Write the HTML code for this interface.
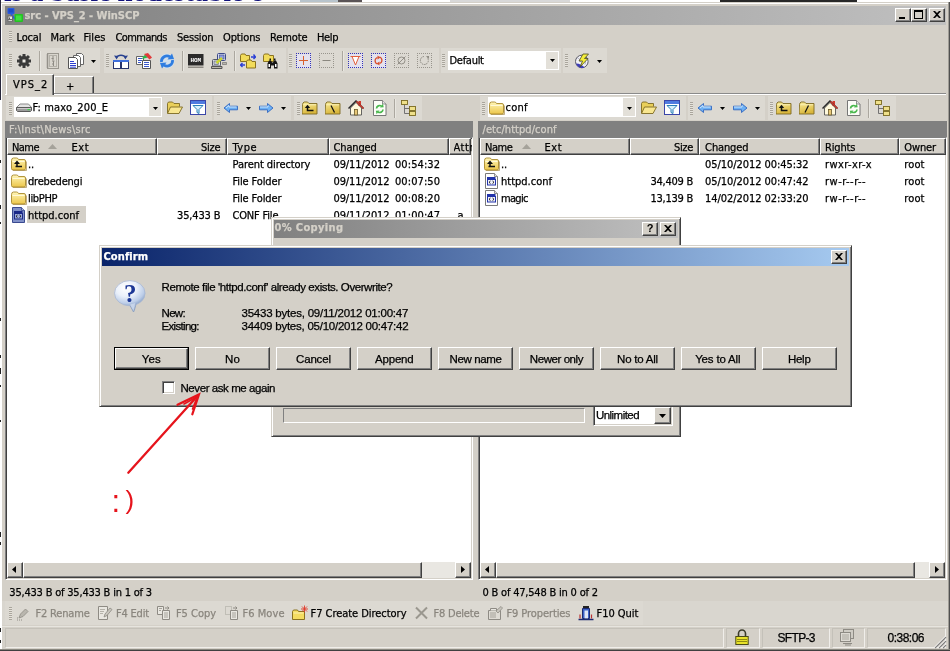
<!DOCTYPE html><html><head><meta charset="utf-8"><title>src - VPS_2 - WinSCP</title><style>
html,body{margin:0;padding:0}
body{width:950px;height:651px;overflow:hidden;position:relative;background:#d4d0c8;font:11px "DejaVu Sans Condensed","Liberation Sans",sans-serif;color:#000;letter-spacing:-0.25px}
div,span,svg{position:absolute;box-sizing:border-box;white-space:nowrap}
.t{line-height:14px;height:14px}
.ms{font-family:"Liberation Sans",sans-serif;font-size:11px;letter-spacing:-0.3px}
.grip{width:3px;border-left:1px dotted #9a968e;border-right:1px dotted #9a968e;opacity:.0}
.gr{width:3px;background:repeating-linear-gradient(to bottom,#a9a59c 0,#a9a59c 1px,#e6e3dc 1px,#e6e3dc 2px)}
.sep{width:2px;border-left:1px solid #aba79f;border-right:1px solid #e9e7e1}
.raised{background:#d4d0c8;border:1px solid;border-color:#fff #404040 #404040 #fff;box-shadow:inset -1px -1px 0 #808080,inset 1px 1px 0 #d4d0c8}
.btn{background:#d4d0c8;border:1px solid;border-color:#fff #404040 #404040 #fff;box-shadow:inset -1px -1px 0 #808080;text-align:center;height:23px;line-height:20px}
.sunken{border:1px solid;border-color:#808080 #fff #fff #808080;box-shadow:inset 1px 1px 0 #404040,inset -1px -1px 0 #d4d0c8}
.hdr{top:138px;height:17px;background:#d4d0c8;border:1px solid;border-color:#fff #404040 #404040 #fff;box-shadow:inset -1px -1px 0 #808080;line-height:15px;padding-left:5px}
.hdr.r{text-align:right;padding-right:6px;padding-left:0}
.row{height:17px;line-height:17px}
.dis{color:#8a867e}
</style></head><body><div id="w" style="left:0;top:0;width:950px;height:651px;will-change:transform">
<div style="left:0;top:0;width:950px;height:3px;background:#fff;overflow:hidden"><span style="left:4px;top:-23px;font:bold 27px 'Liberation Serif',serif;color:#10107a;letter-spacing:0.300px">is a basic nodestable e</span><div style="left:300px;top:0;width:38px;height:2px;background:#b8c4cc"></div><div style="left:338px;top:0;width:24px;height:2px;background:#5a5456"></div><div style="left:450px;top:0;width:120px;height:2px;background:#d8d8d8"></div><div style="left:720px;top:0;width:137px;height:2px;background:#282828"></div></div>
<div style="left:0;top:2px;width:950px;height:649px;background:#d4d0c8;border-left:1px solid #d4d0c8;border-top:1px solid #d4d0c8;box-shadow:inset 1px 1px 0 #fff"></div>
<div style="left:0;top:0;width:1px;height:651px;background:#fff"></div>
<div style="left:0;top:0;width:1px;height:100px;background:#26263a"></div>
<div style="left:0;top:160px;width:1px;height:3px;background:#222"></div>
<div style="left:0;top:178px;width:1px;height:2px;background:#222"></div>
<div style="left:0;top:205px;width:1px;height:4px;background:#222"></div>
<div style="left:0;top:222px;width:1px;height:2px;background:#222"></div>
<div style="left:0;top:318px;width:1px;height:3px;background:#222"></div>
<div style="left:0;top:355px;width:1px;height:3px;background:#222"></div>
<div style="left:0;top:368px;width:1px;height:6px;background:#222"></div>
<div style="left:0;top:385px;width:1px;height:2px;background:#222"></div>
<div style="left:0;top:420px;width:1px;height:2px;background:#222"></div>
<div style="left:0;top:532px;width:1px;height:5px;background:#222"></div>
<div style="left:0;top:542px;width:1px;height:3px;background:#222"></div>
<div style="left:0;top:628px;width:1px;height:4px;background:#222"></div>
<div style="left:0;top:640px;width:1px;height:3px;background:#222"></div>
<div style="left:5px;top:6px;width:941px;height:19px;background:linear-gradient(to right,#808080,#c0c0c0)"></div>
<div style="left:24.5px;top:8px;font:bold 11px 'DejaVu Sans Condensed','Liberation Sans',sans-serif;line-height:16px;height:16px;letter-spacing:-0.03px;white-space:pre;-webkit-text-stroke:0.25px;color:#d4d0c8;">src - VPS_2 - WinSCP</div>
<svg style="left:7px;top:7px" width="17" height="16" viewBox="0 0 17 16"><rect x="0.500" y="1" width="7" height="6" rx="1" fill="#2a5ae0"/><rect x="1.500" y="2" width="5" height="3.500" fill="#1e49c8"/><path d="M4 7l4 5" stroke="#2a5ae0" stroke-width="2"/><rect x="0.500" y="8.500" width="5.500" height="6" fill="#6a6a6a"/><rect x="1.500" y="9.500" width="3.500" height="2.500" fill="#e8e8e8"/><rect x="2" y="10.500" width="1" height="1.500" fill="#555"/><rect x="1.500" y="13" width="3.500" height="1" fill="#d0d0d0"/><rect x="7.500" y="7" width="8.500" height="8" rx="1" fill="#22c322"/><rect x="9" y="8.500" width="5.500" height="5" fill="#3fe03f"/></svg>
<div class="btn" style="left:895px;top:8px;width:16px;height:14px"></div>
<div style="left:899px;top:17px;width:6px;height:2px;background:#000"></div>
<div class="btn" style="left:911px;top:8px;width:16px;height:14px"></div>
<div style="left:914px;top:10px;width:9px;height:9px;border:1px solid #000;border-top-width:2px"></div>
<div class="btn" style="left:929px;top:8px;width:16px;height:14px"></div>
<svg style="left:933px;top:11px" width="8" height="7" viewBox="0 0 8 7"><path d="M0 0h2l2 2 2-2h2L5 3.5 8 7H6L4 5 2 7H0l3-3.5z" fill="#000"/></svg>
<div class="gr" style="left:9px;top:31px;height:11px"></div>
<div style="left:16.5px;top:29.5px;font:11px 'DejaVu Sans Condensed','Liberation Sans',sans-serif;line-height:16px;height:16px;letter-spacing:-0.16px;white-space:pre;-webkit-text-stroke:0.25px;">Local</div>
<div style="left:50.5px;top:29.5px;font:11px 'DejaVu Sans Condensed','Liberation Sans',sans-serif;line-height:16px;height:16px;letter-spacing:-0.14px;white-space:pre;-webkit-text-stroke:0.25px;">Mark</div>
<div style="left:83.5px;top:29.5px;font:11px 'DejaVu Sans Condensed','Liberation Sans',sans-serif;line-height:16px;height:16px;letter-spacing:0.09px;white-space:pre;-webkit-text-stroke:0.25px;">Files</div>
<div style="left:115.5px;top:29.5px;font:11px 'DejaVu Sans Condensed','Liberation Sans',sans-serif;line-height:16px;height:16px;letter-spacing:-0.58px;white-space:pre;-webkit-text-stroke:0.25px;">Commands</div>
<div style="left:177px;top:29.5px;font:11px 'DejaVu Sans Condensed','Liberation Sans',sans-serif;line-height:16px;height:16px;letter-spacing:-0.21px;white-space:pre;-webkit-text-stroke:0.25px;">Session</div>
<div style="left:223px;top:29.5px;font:11px 'DejaVu Sans Condensed','Liberation Sans',sans-serif;line-height:16px;height:16px;letter-spacing:-0.11px;white-space:pre;-webkit-text-stroke:0.25px;">Options</div>
<div style="left:270px;top:29.5px;font:11px 'DejaVu Sans Condensed','Liberation Sans',sans-serif;line-height:16px;height:16px;letter-spacing:-0.13px;white-space:pre;-webkit-text-stroke:0.25px;">Remote</div>
<div style="left:317px;top:29.5px;font:11px 'DejaVu Sans Condensed','Liberation Sans',sans-serif;line-height:16px;height:16px;letter-spacing:-0.36px;white-space:pre;-webkit-text-stroke:0.25px;">Help</div>
<div style="left:5px;top:48px;width:95px;height:25px;background:#dcd9d2"></div>
<div style="left:104px;top:48px;width:182px;height:25px;background:#dcd9d2"></div>
<div style="left:288px;top:48px;width:151px;height:25px;background:#dcd9d2"></div>
<div style="left:441px;top:48px;width:120px;height:25px;background:#dcd9d2"></div>
<div style="left:563px;top:48px;width:44px;height:25px;background:#dcd9d2"></div>
<div class="gr" style="left:9px;top:54px;height:13px"></div>
<div class="gr" style="left:106px;top:54px;height:13px"></div>
<div class="gr" style="left:289px;top:54px;height:13px"></div>
<div class="gr" style="left:442px;top:54px;height:13px"></div>
<div class="gr" style="left:565px;top:54px;height:13px"></div>
<div class="sep" style="left:39px;top:51px;height:20px"></div>
<div class="sep" style="left:182px;top:51px;height:20px"></div>
<div class="sep" style="left:234px;top:51px;height:20px"></div>
<div class="sep" style="left:342px;top:51px;height:20px"></div>
<svg style="left:16px;top:53px" width="16" height="16" viewBox="0 0 16 16"><g fill="#3a3a3a"><circle cx="8" cy="8" r="5"/><g id="gt"><rect x="6.500" y="1" width="3" height="14"/><rect x="1" y="6.500" width="14" height="3"/></g><use href="#gt" transform="rotate(45 8 8)"/></g><rect x="6.500" y="6.500" width="3" height="3" fill="#eceae4"/></svg>
<svg style="left:45px;top:53px" width="16" height="16" viewBox="0 0 16 16"><rect x="2.500" y="0.500" width="11" height="15" fill="#d9d6ce" stroke="#9a978f"/><rect x="4.500" y="2.500" width="7" height="11" fill="none" stroke="#b3b0a8"/><path d="M8 3v4M7 8h2.500M8.500 8v5M6.500 5.500h2M7 11h2" stroke="#8e8b84"/><path d="M1.500 2h2M1.500 4h2M1.500 6h2M1.500 8h2M1.500 10h2M1.500 12h2M1.500 14h2" stroke="#8e8b84"/></svg>
<svg style="left:68px;top:53px" width="16" height="16" viewBox="0 0 16 16"><path d="M8.500 0.500h5l2 2v9h-7z" fill="#fff" stroke="#666"/><path d="M5.500 2.500h5l2 2v9h-7z" fill="#fff" stroke="#666"/><path d="M0.500 4.500h7l2 2v9h-9z" fill="#fff" stroke="#555"/><path d="M2 8.500h4M2 10.500h6M2 12.500h6M2 14.200h6" stroke="#2e3fcf"/></svg>
<svg style="left:113px;top:53px" width="16" height="16" viewBox="0 0 16 16"><rect x="0.500" y="7.500" width="7" height="8" fill="#fff" stroke="#27336b"/><rect x="8.500" y="7.500" width="7" height="8" fill="#fff" stroke="#27336b"/><rect x="0" y="7" width="16" height="2" fill="#3f6fdc"/><path d="M3.500 4.500C5 1.500 11 1.500 12.500 4.500" fill="none" stroke="#27408f" stroke-width="1.300"/><path d="M1 2.500l2.700 4 1.800-3.500zM15 2.500l-2.700 4-1.800-3.500z" fill="#27408f"/></svg>
<svg style="left:136px;top:53px" width="16" height="16" viewBox="0 0 16 16"><path d="M0.500 3.500h7v8h-7z" fill="#fff" stroke="#666"/><path d="M2 5.500h4M2 7.500h4M2 9.500h3" stroke="#3a57c9"/><path d="M6.500 7.500h8v8h-8z" fill="#fff" stroke="#555"/><path d="M8 9.500h5M8 11.500h5M8 13.500h5" stroke="#3a57c9"/><path d="M5.500 6l3.500-4.500 3 3z" fill="#2cb84a"/><path d="M8 1l4-1 4 4.500-2.500 2z" fill="#e23a3a"/></svg>
<svg style="left:159px;top:53px" width="16" height="16" viewBox="0 0 16 16"><circle cx="8" cy="8" r="7.500" fill="#cfe2f7" opacity="0.700"/><path d="M2.500 9a5.500 5.500 0 0 1 8.500-5.200" fill="none" stroke="#2f7de0" stroke-width="2.800"/><path d="M8.500 6.500l6.500-0.500-2-5.500z" fill="#2f7de0"/><path d="M13.500 7a5.500 5.500 0 0 1-8.500 5.200" fill="none" stroke="#2f7de0" stroke-width="2.800"/><path d="M7.500 9.500l-6.500 0.500 2 5.500z" fill="#2f7de0"/></svg>
<svg style="left:188px;top:53px" width="16" height="16" viewBox="0 0 16 16"><rect x="0" y="1" width="15.500" height="11.500" fill="#2a2a2a"/><rect x="0" y="13.500" width="15.500" height="1.500" fill="#8e8b84"/><text x="7.800" y="8.500" font-family="Liberation Mono,monospace" font-weight="bold" font-size="6" fill="#fff" text-anchor="middle" letter-spacing="-0.100">HOM</text></svg>
<svg style="left:211px;top:53px" width="16" height="16" viewBox="0 0 16 16"><rect x="6.500" y="0.500" width="8" height="7" rx="1" fill="#d5daea" stroke="#3c4a8a"/><rect x="8.500" y="2" width="4.500" height="4" fill="#8e9be0" stroke="#3c4a8a" stroke-width="0.600"/><rect x="1.500" y="6.500" width="8" height="6.500" rx="1" fill="#e4e6ee" stroke="#555a6a"/><rect x="3" y="8" width="4.500" height="3.500" fill="#c2c6d4" stroke="#555a6a" stroke-width="0.600"/><path d="M0.500 13.500h10.500v2h-10.500z" fill="#b9b6ad" stroke="#555"/><path d="M11.500 9.500h4v2h-4z" fill="#b9b6ad" stroke="#666" stroke-width="0.600"/><path d="M5.500 10l5.500-5" stroke="#c9d630" stroke-width="2.500"/></svg>
<svg style="left:240px;top:53px" width="16" height="16" viewBox="0 0 16 16"><path d="M0.500 2.500l1-1.500h3.500l1 1.500h3.500v6h-9z" fill="#f2dc5a" stroke="#8a7320"/><path d="M6.500 8.500l1-1.500h3.500l1 1.500h3.500v6.500h-9z" fill="#f2dc5a" stroke="#8a7320"/><path d="M11 4h4.500l-2-2.500M15.500 4l-2 2" fill="none" stroke="#2a3fd6" stroke-width="1.400"/><path d="M5 12h-4.500l2-2M0.500 12l2 2" fill="none" stroke="#2a3fd6" stroke-width="1.400"/></svg>
<svg style="left:263px;top:53px" width="16" height="16" viewBox="0 0 16 16"><path d="M0.500 2.500l1-1.500h4l1 1.500h4v6h-10z" fill="#f2dc5a" stroke="#8a7320"/><path d="M4.500 15.500v-5l1.500-3h2l1 2h1l1-2h2l1.500 3v5h-3.500v-3h-3v3z" fill="#151515"/><rect x="5.500" y="11" width="1.500" height="3" fill="#fff"/><rect x="12" y="11" width="1.500" height="3" fill="#fff"/><rect x="6.500" y="5.500" width="1.500" height="2" fill="#151515"/><rect x="11" y="5.500" width="1.500" height="2" fill="#151515"/></svg>
<svg style="left:296px;top:53px" width="16" height="16" viewBox="0 0 16 16"><rect x="0.500" y="0.500" width="14" height="14" fill="#e4e2ee" stroke="#3232b8" stroke-dasharray="1 1" stroke-dashoffset="0.5" shape-rendering="crispEdges"/><path d="M7.500 3v9M3 7.500h9" stroke="#d8602e" stroke-width="1"/></svg>
<svg style="left:319px;top:53px" width="16" height="16" viewBox="0 0 16 16"><rect x="0.500" y="0.500" width="14" height="14" fill="none" stroke="#98958d" stroke-dasharray="1 1" stroke-dashoffset="0.5" shape-rendering="crispEdges"/><path d="M3.500 7.500h8" stroke="#8a877f" stroke-width="1"/></svg>
<svg style="left:348px;top:53px" width="16" height="16" viewBox="0 0 16 16"><rect x="0.500" y="0.500" width="14" height="14" fill="#e4e2ee" stroke="#3232b8" stroke-dasharray="1 1" stroke-dashoffset="0.5" shape-rendering="crispEdges"/><path d="M4 3.500l3.500 8.500 3.500-8.500z" fill="#fff"/><path d="M2.500 3.500h10M4 3.500l3.500 8.500 3.500-8.500" fill="none" stroke="#e2603c" stroke-width="1"/></svg>
<svg style="left:371px;top:53px" width="16" height="16" viewBox="0 0 16 16"><rect x="0.500" y="0.500" width="14" height="14" fill="#e4e2ee" stroke="#3232b8" stroke-dasharray="1 1" stroke-dashoffset="0.5" shape-rendering="crispEdges"/><path d="M6.500 11a3.400 3.400 0 0 1 0-6.500M8.500 4a3.400 3.400 0 0 1 0 6.500" fill="none" stroke="#d8502e" stroke-width="1.300"/><path d="M6.500 2.500l3 2-3 2zM8.500 8.500l-3 2 3 2z" fill="#d8502e"/></svg>
<svg style="left:394px;top:53px" width="16" height="16" viewBox="0 0 16 16"><rect x="0.500" y="0.500" width="14" height="14" fill="none" stroke="#98958d" stroke-dasharray="1 1" stroke-dashoffset="0.5" shape-rendering="crispEdges"/><circle cx="7.500" cy="7.500" r="3.500" fill="none" stroke="#8a877f" stroke-width="0.900"/><path d="M3.500 11.500l8-8" stroke="#8a877f" stroke-width="0.900"/></svg>
<svg style="left:417px;top:53px" width="16" height="16" viewBox="0 0 16 16"><rect x="0.500" y="0.500" width="14" height="14" fill="none" stroke="#98958d" stroke-dasharray="1 1" stroke-dashoffset="0.5" shape-rendering="crispEdges"/><path d="M10.800 5.500a4 4 0 1 1-3.300-2" fill="none" stroke="#8a877f" stroke-width="1" stroke-dasharray="1.500 0.800"/><path d="M9 3.200l3-0.200-0.200 3z" fill="#8a877f"/></svg>
<svg style="left:575px;top:53px" width="16" height="16" viewBox="0 0 16 16"><circle cx="6.800" cy="8.500" r="6.300" fill="#f2f2f6" stroke="#5a5a66" stroke-width="1"/><path d="M1 10.500a6.300 6.300 0 0 0 8.500 4c-1.500-2-5-4-8.500-4z" fill="#3d3db8"/><path d="M2.500 5c2 0.500 3 2 3 4M9 3.500c1.500 2 2 5 1 8" fill="none" stroke="#9a9ab0" stroke-width="0.800"/><path d="M13.500 1h-5.500l-4 7h3.500l-2.500 6 8-8.500h-3.500z" fill="#f4ee3a" stroke="#4a4a22" stroke-width="0.800" stroke-linejoin="round"/></svg>
<svg style="left:91px;top:60px" width="5" height="3" viewBox="0 0 5 3"><path d="M0 0h5L2.5 3z" fill="#000"/></svg>
<svg style="left:597px;top:60px" width="5" height="3" viewBox="0 0 5 3"><path d="M0 0h5L2.5 3z" fill="#000"/></svg>
<div style="left:448px;top:51px;width:111px;height:19px;background:#fff"></div>
<div style="left:546px;top:52px;width:12px;height:17px;background:#e3e0d9"></div>
<div style="left:449.5px;top:53px;font:11px 'DejaVu Sans Condensed','Liberation Sans',sans-serif;line-height:16px;height:16px;letter-spacing:-0.28px;white-space:pre;-webkit-text-stroke:0.25px;">Default</div>
<svg style="left:550px;top:59px" width="5" height="3" viewBox="0 0 5 3"><path d="M0 0h5L2.5 3z" fill="#000"/></svg>
<div style="left:5px;top:94px;width:941px;height:2px;border-top:1px solid #fff;background:#d4d0c8"></div>
<div style="left:54px;top:93px;width:892px;height:1px;background:#8a8a8a"></div>
<div style="left:54px;top:76px;width:40px;height:17px;background:#d4d0c8;border:1px solid;border-color:#fff #404040 transparent #fff;border-bottom:none;box-shadow:inset -1px 0 0 #808080"></div>
<div style="left:6px;top:74px;width:48px;height:21px;background:#d4d0c8;border:1px solid;border-color:#fff #404040 transparent #fff;border-bottom:none;box-shadow:inset -1px 0 0 #808080"></div>
<div style="left:13px;top:76.5px;font:11px 'DejaVu Sans Condensed','Liberation Sans',sans-serif;line-height:16px;height:16px;letter-spacing:0.98px;white-space:pre;-webkit-text-stroke:0.25px;">VPS_2</div>
<div style="left:66px;top:79px;font:11px 'DejaVu Sans Condensed','Liberation Sans',sans-serif;line-height:16px;height:16px;letter-spacing:-0.25px;white-space:pre;-webkit-text-stroke:0.25px;">+</div>
<div style="left:5px;top:96px;width:468px;height:24px;background:#d4d0c8"></div>
<div style="left:6px;top:96px;width:206px;height:24px;background:#dcd9d2"></div>
<div style="left:214px;top:96px;width:77px;height:24px;background:#dcd9d2"></div>
<div style="left:294px;top:96px;width:128px;height:24px;background:#dcd9d2"></div>
<div class="gr" style="left:9px;top:102px;height:13px"></div>
<div class="gr" style="left:217px;top:102px;height:13px"></div>
<div class="gr" style="left:297px;top:102px;height:13px"></div>
<div style="left:14px;top:97px;width:148px;height:20px;background:#fff"></div>
<div style="left:149px;top:98px;width:12px;height:18px;background:#e3e0d9"></div>
<svg style="left:153px;top:107px" width="5" height="3" viewBox="0 0 5 3"><path d="M0 0h5L2.5 3z" fill="#000"/></svg>
<svg style="left:16px;top:100px" width="16" height="16" viewBox="0 0 16 16"><path d="M0.500 7.500l3.500-3.500h8.500l3 3.500z" fill="#e3e3e3" stroke="#8a8a8a"/><path d="M0.500 7.500h15v3l-1 1h-13l-1-1z" fill="#9c9c9c" stroke="#5a5a5a"/><path d="M1 8.500h14" stroke="#c9c9c9"/><rect x="11.500" y="9" width="2.500" height="1.200" fill="#3fd24a"/></svg>
<div style="left:32.5px;top:100px;font:11px 'DejaVu Sans Condensed','Liberation Sans',sans-serif;line-height:16px;height:16px;letter-spacing:0.16px;white-space:pre;-webkit-text-stroke:0.25px;">F: maxo_200_E</div>
<svg style="left:167px;top:100px" width="16" height="16" viewBox="0 0 16 16"><path d="M0.500 13v-9.500l1-1.500h4l1.500 1.500h5.500v3" fill="#e9cf5a" stroke="#7d6a22" stroke-width="0.900"/><path d="M0.500 13.500l3-6.500h12l-3.500 6.500z" fill="#f8e690" stroke="#7d6a22" stroke-width="0.900"/></svg>
<svg style="left:190px;top:100px" width="16" height="16" viewBox="0 0 16 16"><rect x="0.500" y="0.500" width="15" height="14" fill="#fff" stroke="#3a46a8"/><rect x="1" y="1" width="14" height="3" fill="#4f7be0"/><path d="M3 5.500h10l-4 4v4l-2-1v-3z" fill="#d9f0fb" stroke="#2a7fb8"/></svg>
<svg style="left:223px;top:100px" width="16" height="16" viewBox="0 0 16 16"><path d="M1 8l5.500-4.500v2.700h8v3.600h-8v2.700z" fill="#6db1f5" stroke="#3268c0" stroke-linejoin="round" stroke-width="0.900"/><path d="M3 8l3-2.500v1.500h7.500" fill="none" stroke="#cfe6fc"/></svg>
<svg style="left:246px;top:107px" width="5" height="3" viewBox="0 0 5 3"><path d="M0 0h5L2.5 3z" fill="#000"/></svg>
<svg style="left:258px;top:100px" width="16" height="16" viewBox="0 0 16 16"><path d="M15 8l-5.500-4.500v2.700h-8v3.600h8v2.700z" fill="#6db1f5" stroke="#3268c0" stroke-linejoin="round" stroke-width="0.900"/><path d="M2 7h8v-1.500" fill="none" stroke="#cfe6fc"/></svg>
<svg style="left:281px;top:107px" width="5" height="3" viewBox="0 0 5 3"><path d="M0 0h5L2.5 3z" fill="#000"/></svg>
<svg style="left:302px;top:100px" width="16" height="16" viewBox="0 0 16 16"><defs><linearGradient id="fg2" x1="0" y1="0" x2="0.300" y2="1"><stop offset="0" stop-color="#fbee9c"/><stop offset="1" stop-color="#d9b63c"/></linearGradient></defs><path d="M0.500 4.500l0.500-1.500 1-1h3.500l1.500 1.500h8v10.500h-15z" fill="url(#fg2)" stroke="#7d6a22" stroke-width="0.900"/><path d="M1.500 4.800h12.500" stroke="#fdf6c4" stroke-width="0.800"/><path d="M5.500 7v3.500h6" fill="none" stroke="#111" stroke-width="1.500"/><path d="M2.800 8l2.700-3.200 2.700 3.200z" fill="#111"/></svg>
<svg style="left:325px;top:100px" width="16" height="16" viewBox="0 0 16 16"><defs><linearGradient id="fg2" x1="0" y1="0" x2="0.300" y2="1"><stop offset="0" stop-color="#fbee9c"/><stop offset="1" stop-color="#d9b63c"/></linearGradient></defs><path d="M0.500 4.500l0.500-1.500 1-1h3.500l1.500 1.500h8v10.500h-15z" fill="url(#fg2)" stroke="#7d6a22" stroke-width="0.900"/><path d="M1.500 4.800h12.500" stroke="#fdf6c4" stroke-width="0.800"/><path d="M6 5.500l3.500 7" stroke="#111" stroke-width="1.300"/></svg>
<svg style="left:348px;top:100px" width="16" height="16" viewBox="0 0 16 16"><path d="M2.500 8v7h11v-7l-5.500-5.500z" fill="#fff9dc" stroke="#555" stroke-width="0.900"/><rect x="10.500" y="1" width="2.500" height="5" fill="#d23a2e"/><path d="M0.500 8.500l7.500-7.500 7.500 7.500" fill="none" stroke="#2a2a2a" stroke-width="1.500"/><path d="M8.500 1.500l7 7" stroke="#c8382c" stroke-width="1.500"/><rect x="6.500" y="9.500" width="3" height="5.500" fill="#e8c878" stroke="#6a5a2a" stroke-width="0.800"/></svg>
<svg style="left:372px;top:100px" width="16" height="16" viewBox="0 0 16 16"><path d="M1.500 0.500h9l3.500 3.500v11.500h-12.500z" fill="#fdfdf8" stroke="#777"/><path d="M10.500 0.500v3.500h3.500" fill="#e6e6e6" stroke="#777" stroke-width="0.800"/><path d="M4.500 8.500a3.300 3.300 0 0 1 5-2.500" fill="none" stroke="#4ab84e" stroke-width="1.700"/><path d="M8 7.500l3.700-0.200-0.800-3.600z" fill="#4ab84e"/><path d="M11 9.500a3.300 3.300 0 0 1-5 2.500" fill="none" stroke="#4ab84e" stroke-width="1.700"/><path d="M7.500 10.500l-3.700 0.200 0.800 3.600z" fill="#4ab84e"/></svg>
<div class="sep" style="left:394px;top:99px;height:19px"></div>
<svg style="left:401px;top:100px" width="16" height="16" viewBox="0 0 16 16"><path d="M3.500 5v8.500h5M3.500 8.500h5" fill="none" stroke="#666" stroke-width="0.900"/><rect x="0.500" y="0.500" width="6" height="4" fill="#efe08a" stroke="#7a6a20" stroke-width="0.900"/><rect x="8.500" y="6.500" width="6" height="4" fill="#efe08a" stroke="#7a6a20" stroke-width="0.900"/><rect x="8.500" y="11.500" width="6" height="4" fill="#efe08a" stroke="#7a6a20" stroke-width="0.900"/></svg>
<div style="left:479px;top:96px;width:468px;height:24px;background:#d4d0c8"></div>
<div style="left:480px;top:96px;width:206px;height:24px;background:#dcd9d2"></div>
<div style="left:688px;top:96px;width:77px;height:24px;background:#dcd9d2"></div>
<div style="left:768px;top:96px;width:128px;height:24px;background:#dcd9d2"></div>
<div class="gr" style="left:482px;top:102px;height:13px"></div>
<div class="gr" style="left:690px;top:102px;height:13px"></div>
<div class="gr" style="left:770px;top:102px;height:13px"></div>
<div style="left:488px;top:97px;width:148px;height:20px;background:#fff"></div>
<div style="left:623px;top:98px;width:12px;height:18px;background:#e3e0d9"></div>
<svg style="left:627px;top:107px" width="5" height="3" viewBox="0 0 5 3"><path d="M0 0h5L2.5 3z" fill="#000"/></svg>
<svg style="left:489px;top:100px" width="16" height="16" viewBox="0 0 16 16"><defs><linearGradient id="fg" x1="0" y1="0" x2="0" y2="1"><stop offset="0" stop-color="#fff6b8"/><stop offset="1" stop-color="#ecc64a"/></linearGradient></defs><path d="M2 14.500h12.500a1 1 0 0 0 1-1v-8" fill="none" stroke="#9a7a30" stroke-opacity="0.600" stroke-width="1.200"/><path d="M0.500 4.500q0-2.500 2-2.500h3q1.500 0 2 1.500h5.500q1.500 0 1.500 1.500v7.500q0 1.500-1.500 1.500h-11q-1.500 0-1.500-1.500z" fill="url(#fg)" stroke="#a8892c" stroke-width="0.900"/><path d="M1.500 5.500h12" stroke="#fffbe0" stroke-width="0.900"/></svg>
<div style="left:505.5px;top:100px;font:11px 'DejaVu Sans Condensed','Liberation Sans',sans-serif;line-height:16px;height:16px;letter-spacing:0.25px;white-space:pre;-webkit-text-stroke:0.25px;">conf</div>
<svg style="left:641px;top:100px" width="16" height="16" viewBox="0 0 16 16"><path d="M0.500 13v-9.500l1-1.500h4l1.500 1.500h5.500v3" fill="#e9cf5a" stroke="#7d6a22" stroke-width="0.900"/><path d="M0.500 13.500l3-6.500h12l-3.500 6.500z" fill="#f8e690" stroke="#7d6a22" stroke-width="0.900"/></svg>
<svg style="left:664px;top:100px" width="16" height="16" viewBox="0 0 16 16"><rect x="0.500" y="0.500" width="15" height="14" fill="#fff" stroke="#3a46a8"/><rect x="1" y="1" width="14" height="3" fill="#4f7be0"/><path d="M3 5.500h10l-4 4v4l-2-1v-3z" fill="#d9f0fb" stroke="#2a7fb8"/></svg>
<svg style="left:697px;top:100px" width="16" height="16" viewBox="0 0 16 16"><path d="M1 8l5.500-4.500v2.700h8v3.600h-8v2.700z" fill="#6db1f5" stroke="#3268c0" stroke-linejoin="round" stroke-width="0.900"/><path d="M3 8l3-2.500v1.500h7.500" fill="none" stroke="#cfe6fc"/></svg>
<svg style="left:720px;top:107px" width="5" height="3" viewBox="0 0 5 3"><path d="M0 0h5L2.5 3z" fill="#000"/></svg>
<svg style="left:732px;top:100px" width="16" height="16" viewBox="0 0 16 16"><path d="M15 8l-5.500-4.500v2.700h-8v3.600h8v2.700z" fill="#6db1f5" stroke="#3268c0" stroke-linejoin="round" stroke-width="0.900"/><path d="M2 7h8v-1.500" fill="none" stroke="#cfe6fc"/></svg>
<svg style="left:755px;top:107px" width="5" height="3" viewBox="0 0 5 3"><path d="M0 0h5L2.5 3z" fill="#000"/></svg>
<svg style="left:776px;top:100px" width="16" height="16" viewBox="0 0 16 16"><defs><linearGradient id="fg2" x1="0" y1="0" x2="0.300" y2="1"><stop offset="0" stop-color="#fbee9c"/><stop offset="1" stop-color="#d9b63c"/></linearGradient></defs><path d="M0.500 4.500l0.500-1.500 1-1h3.500l1.500 1.500h8v10.500h-15z" fill="url(#fg2)" stroke="#7d6a22" stroke-width="0.900"/><path d="M1.500 4.800h12.500" stroke="#fdf6c4" stroke-width="0.800"/><path d="M5.500 7v3.500h6" fill="none" stroke="#111" stroke-width="1.500"/><path d="M2.800 8l2.700-3.200 2.700 3.200z" fill="#111"/></svg>
<svg style="left:799px;top:100px" width="16" height="16" viewBox="0 0 16 16"><defs><linearGradient id="fg2" x1="0" y1="0" x2="0.300" y2="1"><stop offset="0" stop-color="#fbee9c"/><stop offset="1" stop-color="#d9b63c"/></linearGradient></defs><path d="M0.500 4.500l0.500-1.500 1-1h3.500l1.500 1.500h8v10.500h-15z" fill="url(#fg2)" stroke="#7d6a22" stroke-width="0.900"/><path d="M1.500 4.800h12.500" stroke="#fdf6c4" stroke-width="0.800"/><path d="M9.500 5.500l-3.500 7" stroke="#111" stroke-width="1.300"/></svg>
<svg style="left:822px;top:100px" width="16" height="16" viewBox="0 0 16 16"><path d="M2.500 8v7h11v-7l-5.500-5.500z" fill="#fff9dc" stroke="#555" stroke-width="0.900"/><rect x="10.500" y="1" width="2.500" height="5" fill="#d23a2e"/><path d="M0.500 8.500l7.500-7.500 7.500 7.500" fill="none" stroke="#2a2a2a" stroke-width="1.500"/><path d="M8.500 1.500l7 7" stroke="#c8382c" stroke-width="1.500"/><rect x="6.500" y="9.500" width="3" height="5.500" fill="#e8c878" stroke="#6a5a2a" stroke-width="0.800"/></svg>
<svg style="left:846px;top:100px" width="16" height="16" viewBox="0 0 16 16"><path d="M1.500 0.500h9l3.500 3.500v11.500h-12.500z" fill="#fdfdf8" stroke="#777"/><path d="M10.500 0.500v3.500h3.500" fill="#e6e6e6" stroke="#777" stroke-width="0.800"/><path d="M4.500 8.500a3.300 3.300 0 0 1 5-2.500" fill="none" stroke="#4ab84e" stroke-width="1.700"/><path d="M8 7.500l3.700-0.200-0.800-3.600z" fill="#4ab84e"/><path d="M11 9.500a3.300 3.300 0 0 1-5 2.500" fill="none" stroke="#4ab84e" stroke-width="1.700"/><path d="M7.500 10.500l-3.700 0.200 0.800 3.600z" fill="#4ab84e"/></svg>
<div class="sep" style="left:868px;top:99px;height:19px"></div>
<svg style="left:875px;top:100px" width="16" height="16" viewBox="0 0 16 16"><path d="M3.500 5v8.500h5M3.500 8.500h5" fill="none" stroke="#666" stroke-width="0.900"/><rect x="0.500" y="0.500" width="6" height="4" fill="#efe08a" stroke="#7a6a20" stroke-width="0.900"/><rect x="8.500" y="6.500" width="6" height="4" fill="#efe08a" stroke="#7a6a20" stroke-width="0.900"/><rect x="8.500" y="11.500" width="6" height="4" fill="#efe08a" stroke="#7a6a20" stroke-width="0.900"/></svg>
<div style="left:5px;top:121px;width:468px;height:16px;background:#808080"></div>
<div style="left:9px;top:122px;font:11px 'DejaVu Sans Condensed','Liberation Sans',sans-serif;line-height:16px;height:16px;letter-spacing:0.26px;white-space:pre;-webkit-text-stroke:0.25px;color:#d4d0c8;">F:\Inst\News\src</div>
<div style="left:478px;top:121px;width:469px;height:16px;background:#808080"></div>
<div style="left:482.5px;top:122px;font:11px 'DejaVu Sans Condensed','Liberation Sans',sans-serif;line-height:16px;height:16px;letter-spacing:0.05px;white-space:pre;-webkit-text-stroke:0.25px;color:#d4d0c8;">/etc/httpd/conf</div>
<div class="sunken" style="left:5px;top:137px;width:468px;height:443px;background:#fff"></div>
<div class="sunken" style="left:478px;top:137px;width:469px;height:443px;background:#fff"></div>
<div class="hdr" style="left:7px;width:150px"></div>
<div class="hdr" style="left:157px;width:70px"></div>
<div class="hdr" style="left:227px;width:102px"></div>
<div class="hdr" style="left:329px;width:120px"></div>
<div class="hdr" style="left:449px;width:22px"></div>
<div class="hdr" style="left:480px;width:150px"></div>
<div class="hdr" style="left:630px;width:69px"></div>
<div class="hdr" style="left:699px;width:121px"></div>
<div class="hdr" style="left:820px;width:79px"></div>
<div class="hdr" style="left:899px;width:47px"></div>
<div style="left:12px;top:140px;font:11px 'DejaVu Sans Condensed','Liberation Sans',sans-serif;line-height:16px;height:16px;letter-spacing:-0.57px;white-space:pre;-webkit-text-stroke:0.25px;">Name</div>
<svg style="left:48px;top:144px" width="9" height="5" viewBox="0 0 9 5"><path d="M0 5L4.500 0 9 5z" fill="#a5a29a"/></svg>
<div style="left:71.5px;top:140px;font:11px 'DejaVu Sans Condensed','Liberation Sans',sans-serif;line-height:16px;height:16px;letter-spacing:0.51px;white-space:pre;-webkit-text-stroke:0.25px;">Ext</div>
<div style="left:201px;top:140px;font:11px 'DejaVu Sans Condensed','Liberation Sans',sans-serif;line-height:16px;height:16px;letter-spacing:-0.28px;white-space:pre;-webkit-text-stroke:0.25px;">Size</div>
<div style="left:232.5px;top:140px;font:11px 'DejaVu Sans Condensed','Liberation Sans',sans-serif;line-height:16px;height:16px;letter-spacing:0.48px;white-space:pre;-webkit-text-stroke:0.25px;">Type</div>
<div style="left:333.5px;top:140px;font:11px 'DejaVu Sans Condensed','Liberation Sans',sans-serif;line-height:16px;height:16px;letter-spacing:-0.15px;white-space:pre;-webkit-text-stroke:0.25px;">Changed</div>
<div style="left:453.5px;top:140px;font:11px 'DejaVu Sans Condensed','Liberation Sans',sans-serif;line-height:16px;height:16px;letter-spacing:0.53px;white-space:pre;-webkit-text-stroke:0.25px;width:18px;overflow:hidden;">Attr</div>
<div style="left:485.1px;top:140px;font:11px 'DejaVu Sans Condensed','Liberation Sans',sans-serif;line-height:16px;height:16px;letter-spacing:-0.47px;white-space:pre;-webkit-text-stroke:0.25px;">Name</div>
<svg style="left:522px;top:144px" width="9" height="5" viewBox="0 0 9 5"><path d="M0 5L4.500 0 9 5z" fill="#a5a29a"/></svg>
<div style="left:544.5px;top:140px;font:11px 'DejaVu Sans Condensed','Liberation Sans',sans-serif;line-height:16px;height:16px;letter-spacing:0.51px;white-space:pre;-webkit-text-stroke:0.25px;">Ext</div>
<div style="left:674.1px;top:140px;font:11px 'DejaVu Sans Condensed','Liberation Sans',sans-serif;line-height:16px;height:16px;letter-spacing:-0.38px;white-space:pre;-webkit-text-stroke:0.25px;">Size</div>
<div style="left:705.1px;top:140px;font:11px 'DejaVu Sans Condensed','Liberation Sans',sans-serif;line-height:16px;height:16px;letter-spacing:-0.13px;white-space:pre;-webkit-text-stroke:0.25px;">Changed</div>
<div style="left:825px;top:140px;font:11px 'DejaVu Sans Condensed','Liberation Sans',sans-serif;line-height:16px;height:16px;letter-spacing:-0.14px;white-space:pre;-webkit-text-stroke:0.25px;">Rights</div>
<div style="left:904.3px;top:140px;font:11px 'DejaVu Sans Condensed','Liberation Sans',sans-serif;line-height:16px;height:16px;letter-spacing:-0.15px;white-space:pre;-webkit-text-stroke:0.25px;">Owner</div>
<svg style="left:11px;top:156px" width="16" height="16" viewBox="0 0 16 16"><defs><linearGradient id="fg" x1="0" y1="0" x2="0" y2="1"><stop offset="0" stop-color="#fff6b8"/><stop offset="1" stop-color="#ecc64a"/></linearGradient></defs><path d="M2 14.500h12.500a1 1 0 0 0 1-1v-8" fill="none" stroke="#9a7a30" stroke-opacity="0.600" stroke-width="1.200"/><path d="M0.500 4.500q0-2.500 2-2.500h3q1.500 0 2 1.500h5.500q1.500 0 1.500 1.500v7.500q0 1.500-1.500 1.500h-11q-1.500 0-1.500-1.500z" fill="url(#fg)" stroke="#a8892c" stroke-width="0.900"/><path d="M1.500 5.500h12" stroke="#fffbe0" stroke-width="0.900"/><path d="M4.500 10.500h6.500M6 10.500v-4" fill="none" stroke="#111" stroke-width="1.500"/><path d="M3 8l3-3.500 3 3.500z" fill="#111"/></svg>
<div style="left:28px;top:156.5px;font:11px 'DejaVu Sans Condensed','Liberation Sans',sans-serif;line-height:16px;height:16px;letter-spacing:-0.25px;white-space:pre;-webkit-text-stroke:0.25px;">..</div>
<div style="left:232.5px;top:156.5px;font:11px 'DejaVu Sans Condensed','Liberation Sans',sans-serif;line-height:16px;height:16px;letter-spacing:-0.07px;white-space:pre;-webkit-text-stroke:0.25px;">Parent directory</div>
<div style="left:333.5px;top:156.5px;font:11px 'DejaVu Sans Condensed','Liberation Sans',sans-serif;line-height:16px;height:16px;letter-spacing:-0.11px;white-space:pre;-webkit-text-stroke:0.25px;">09/11/2012</div>
<div style="left:395px;top:156.5px;font:11px 'DejaVu Sans Condensed','Liberation Sans',sans-serif;line-height:16px;height:16px;letter-spacing:0.08px;white-space:pre;-webkit-text-stroke:0.25px;">00:54:32</div>
<svg style="left:11px;top:173px" width="16" height="16" viewBox="0 0 16 16"><defs><linearGradient id="fg" x1="0" y1="0" x2="0" y2="1"><stop offset="0" stop-color="#fff6b8"/><stop offset="1" stop-color="#ecc64a"/></linearGradient></defs><path d="M2 14.500h12.500a1 1 0 0 0 1-1v-8" fill="none" stroke="#9a7a30" stroke-opacity="0.600" stroke-width="1.200"/><path d="M0.500 4.500q0-2.500 2-2.500h3q1.500 0 2 1.500h5.500q1.500 0 1.500 1.500v7.500q0 1.500-1.500 1.500h-11q-1.500 0-1.500-1.500z" fill="url(#fg)" stroke="#a8892c" stroke-width="0.900"/><path d="M1.500 5.500h12" stroke="#fffbe0" stroke-width="0.900"/></svg>
<div style="left:28px;top:173.5px;font:11px 'DejaVu Sans Condensed','Liberation Sans',sans-serif;line-height:16px;height:16px;letter-spacing:-0.2px;white-space:pre;-webkit-text-stroke:0.25px;">drebedengi</div>
<div style="left:232.5px;top:173.5px;font:11px 'DejaVu Sans Condensed','Liberation Sans',sans-serif;line-height:16px;height:16px;letter-spacing:-0.12px;white-space:pre;-webkit-text-stroke:0.25px;">File Folder</div>
<div style="left:333.5px;top:173.5px;font:11px 'DejaVu Sans Condensed','Liberation Sans',sans-serif;line-height:16px;height:16px;letter-spacing:-0.11px;white-space:pre;-webkit-text-stroke:0.25px;">09/11/2012</div>
<div style="left:395px;top:173.5px;font:11px 'DejaVu Sans Condensed','Liberation Sans',sans-serif;line-height:16px;height:16px;letter-spacing:0.08px;white-space:pre;-webkit-text-stroke:0.25px;">00:07:50</div>
<svg style="left:11px;top:190px" width="16" height="16" viewBox="0 0 16 16"><defs><linearGradient id="fg" x1="0" y1="0" x2="0" y2="1"><stop offset="0" stop-color="#fff6b8"/><stop offset="1" stop-color="#ecc64a"/></linearGradient></defs><path d="M2 14.500h12.500a1 1 0 0 0 1-1v-8" fill="none" stroke="#9a7a30" stroke-opacity="0.600" stroke-width="1.200"/><path d="M0.500 4.500q0-2.500 2-2.500h3q1.500 0 2 1.500h5.500q1.500 0 1.500 1.500v7.500q0 1.500-1.500 1.500h-11q-1.500 0-1.500-1.500z" fill="url(#fg)" stroke="#a8892c" stroke-width="0.900"/><path d="M1.500 5.500h12" stroke="#fffbe0" stroke-width="0.900"/></svg>
<div style="left:28px;top:190.5px;font:11px 'DejaVu Sans Condensed','Liberation Sans',sans-serif;line-height:16px;height:16px;letter-spacing:-0.33px;white-space:pre;-webkit-text-stroke:0.25px;">libPHP</div>
<div style="left:232.5px;top:190.5px;font:11px 'DejaVu Sans Condensed','Liberation Sans',sans-serif;line-height:16px;height:16px;letter-spacing:-0.12px;white-space:pre;-webkit-text-stroke:0.25px;">File Folder</div>
<div style="left:333.5px;top:190.5px;font:11px 'DejaVu Sans Condensed','Liberation Sans',sans-serif;line-height:16px;height:16px;letter-spacing:-0.11px;white-space:pre;-webkit-text-stroke:0.25px;">09/11/2012</div>
<div style="left:395px;top:190.5px;font:11px 'DejaVu Sans Condensed','Liberation Sans',sans-serif;line-height:16px;height:16px;letter-spacing:0.08px;white-space:pre;-webkit-text-stroke:0.25px;">00:08:20</div>
<div style="left:27px;top:206px;width:59px;height:17px;background:#d4d0c8"></div>
<svg style="left:11px;top:207px" width="16" height="16" viewBox="0 0 16 16"><path d="M1.500 0.500h9l3 3v12h-12z" fill="#8090c8" stroke="#3a4a90"/><path d="M10.500 0.500v3h3" fill="#a8b4dc" stroke="#3a4a90" stroke-width="0.800"/><rect x="3" y="4" width="8.500" height="2.500" fill="#1a2888"/><rect x="3.500" y="6.500" width="8" height="5.500" fill="#9aa8d8" stroke="#1a2888"/><path d="M6.500 8l-1.500 1.300 1.500 1.300M8.500 8l1.500 1.300-1.500 1.300" fill="none" stroke="#111" stroke-width="0.900"/></svg>
<div style="left:28px;top:207.5px;font:11px 'DejaVu Sans Condensed','Liberation Sans',sans-serif;line-height:16px;height:16px;letter-spacing:0.0px;white-space:pre;-webkit-text-stroke:0.25px;">httpd.conf</div>
<div style="left:177px;top:207.5px;font:11px 'DejaVu Sans Condensed','Liberation Sans',sans-serif;line-height:16px;height:16px;letter-spacing:-0.15px;white-space:pre;-webkit-text-stroke:0.25px;">35,433 B</div>
<div style="left:232.5px;top:207.5px;font:11px 'DejaVu Sans Condensed','Liberation Sans',sans-serif;line-height:16px;height:16px;letter-spacing:-0.18px;white-space:pre;-webkit-text-stroke:0.25px;">CONF File</div>
<div style="left:333.5px;top:207.5px;font:11px 'DejaVu Sans Condensed','Liberation Sans',sans-serif;line-height:16px;height:16px;letter-spacing:-0.11px;white-space:pre;-webkit-text-stroke:0.25px;">09/11/2012</div>
<div style="left:395px;top:207.5px;font:11px 'DejaVu Sans Condensed','Liberation Sans',sans-serif;line-height:16px;height:16px;letter-spacing:0.08px;white-space:pre;-webkit-text-stroke:0.25px;">01:00:47</div>
<div style="left:457.5px;top:207.5px;font:11px 'DejaVu Sans Condensed','Liberation Sans',sans-serif;line-height:16px;height:16px;letter-spacing:-0.25px;white-space:pre;-webkit-text-stroke:0.25px;">a</div>
<svg style="left:484px;top:156px" width="16" height="16" viewBox="0 0 16 16"><defs><linearGradient id="fg" x1="0" y1="0" x2="0" y2="1"><stop offset="0" stop-color="#fff6b8"/><stop offset="1" stop-color="#ecc64a"/></linearGradient></defs><path d="M2 14.500h12.500a1 1 0 0 0 1-1v-8" fill="none" stroke="#9a7a30" stroke-opacity="0.600" stroke-width="1.200"/><path d="M0.500 4.500q0-2.500 2-2.500h3q1.500 0 2 1.500h5.500q1.500 0 1.500 1.500v7.500q0 1.500-1.500 1.500h-11q-1.500 0-1.500-1.500z" fill="url(#fg)" stroke="#a8892c" stroke-width="0.900"/><path d="M1.500 5.500h12" stroke="#fffbe0" stroke-width="0.900"/><path d="M4.500 10.500h6.500M6 10.500v-4" fill="none" stroke="#111" stroke-width="1.500"/><path d="M3 8l3-3.500 3 3.500z" fill="#111"/></svg>
<div style="left:501px;top:156.5px;font:11px 'DejaVu Sans Condensed','Liberation Sans',sans-serif;line-height:16px;height:16px;letter-spacing:-0.25px;white-space:pre;-webkit-text-stroke:0.25px;">..</div>
<div style="left:705.1px;top:156.5px;font:11px 'DejaVu Sans Condensed','Liberation Sans',sans-serif;line-height:16px;height:16px;letter-spacing:-0.06px;white-space:pre;-webkit-text-stroke:0.25px;">05/10/2012 00:45:32</div>
<div style="left:825px;top:156.5px;font:11px 'DejaVu Sans Condensed','Liberation Sans',sans-serif;line-height:16px;height:16px;letter-spacing:0.39px;white-space:pre;-webkit-text-stroke:0.25px;">rwxr-xr-x</div>
<div style="left:904.3px;top:156.5px;font:11px 'DejaVu Sans Condensed','Liberation Sans',sans-serif;line-height:16px;height:16px;letter-spacing:0.13px;white-space:pre;-webkit-text-stroke:0.25px;">root</div>
<svg style="left:484px;top:173px" width="16" height="16" viewBox="0 0 16 16"><path d="M1.500 0.500h9l3 3v12h-12z" fill="#ffffff" stroke="#7a7a7a"/><path d="M10.500 0.500v3h3" fill="#e0e0e0" stroke="#7a7a7a" stroke-width="0.800"/><rect x="3" y="4" width="8.500" height="2.500" fill="#2233aa"/><rect x="3.500" y="6.500" width="8" height="5.500" fill="#eef0fa" stroke="#2233aa"/><path d="M6.500 8l-1.500 1.300 1.500 1.300M8.500 8l1.500 1.300-1.500 1.300" fill="none" stroke="#111" stroke-width="0.900"/></svg>
<div style="left:501px;top:173.5px;font:11px 'DejaVu Sans Condensed','Liberation Sans',sans-serif;line-height:16px;height:16px;letter-spacing:0.0px;white-space:pre;-webkit-text-stroke:0.25px;">httpd.conf</div>
<div style="left:650.5px;top:173.5px;font:11px 'DejaVu Sans Condensed','Liberation Sans',sans-serif;line-height:16px;height:16px;letter-spacing:-0.25px;white-space:pre;-webkit-text-stroke:0.25px;">34,409 B</div>
<div style="left:705.1px;top:173.5px;font:11px 'DejaVu Sans Condensed','Liberation Sans',sans-serif;line-height:16px;height:16px;letter-spacing:-0.06px;white-space:pre;-webkit-text-stroke:0.25px;">05/10/2012 00:47:42</div>
<div style="left:825px;top:173.5px;font:11px 'DejaVu Sans Condensed','Liberation Sans',sans-serif;line-height:16px;height:16px;letter-spacing:0.49px;white-space:pre;-webkit-text-stroke:0.25px;">rw-r--r--</div>
<div style="left:904.3px;top:173.5px;font:11px 'DejaVu Sans Condensed','Liberation Sans',sans-serif;line-height:16px;height:16px;letter-spacing:0.13px;white-space:pre;-webkit-text-stroke:0.25px;">root</div>
<svg style="left:484px;top:190px" width="16" height="16" viewBox="0 0 16 16"><path d="M1.500 0.500h9l3 3v12h-12z" fill="#ffffff" stroke="#7a7a7a"/><path d="M10.500 0.500v3h3" fill="#e0e0e0" stroke="#7a7a7a" stroke-width="0.800"/><rect x="3" y="4" width="8.500" height="2.500" fill="#2233aa"/><rect x="3.500" y="6.500" width="8" height="5.500" fill="#eef0fa" stroke="#2233aa"/><path d="M6.500 8l-1.500 1.300 1.500 1.300M8.500 8l1.500 1.300-1.500 1.300" fill="none" stroke="#111" stroke-width="0.900"/></svg>
<div style="left:501px;top:190.5px;font:11px 'DejaVu Sans Condensed','Liberation Sans',sans-serif;line-height:16px;height:16px;letter-spacing:-0.67px;white-space:pre;-webkit-text-stroke:0.25px;">magic</div>
<div style="left:650.5px;top:190.5px;font:11px 'DejaVu Sans Condensed','Liberation Sans',sans-serif;line-height:16px;height:16px;letter-spacing:-0.25px;white-space:pre;-webkit-text-stroke:0.25px;">13,139 B</div>
<div style="left:705.1px;top:190.5px;font:11px 'DejaVu Sans Condensed','Liberation Sans',sans-serif;line-height:16px;height:16px;letter-spacing:-0.06px;white-space:pre;-webkit-text-stroke:0.25px;">14/02/2012 02:33:20</div>
<div style="left:825px;top:190.5px;font:11px 'DejaVu Sans Condensed','Liberation Sans',sans-serif;line-height:16px;height:16px;letter-spacing:0.49px;white-space:pre;-webkit-text-stroke:0.25px;">rw-r--r--</div>
<div style="left:904.3px;top:190.5px;font:11px 'DejaVu Sans Condensed','Liberation Sans',sans-serif;line-height:16px;height:16px;letter-spacing:0.13px;white-space:pre;-webkit-text-stroke:0.25px;">root</div>
<div style="left:7px;top:562px;width:464px;height:16px;background:#e9e7e2"></div>
<div class="raised" style="left:7px;top:562px;width:16px;height:16px"></div>
<div class="raised" style="left:455px;top:562px;width:16px;height:16px"></div>
<div class="raised" style="left:23px;top:562px;width:399px;height:16px"></div>
<svg style="left:12px;top:566px" width="4" height="7" viewBox="0 0 4 7"><path d="M4 0v7L0 3.500z" fill="#000"/></svg>
<svg style="left:461px;top:566px" width="4" height="7" viewBox="0 0 4 7"><path d="M0 0v7L4 3.500z" fill="#000"/></svg>
<div style="left:480px;top:562px;width:465px;height:16px;background:#e9e7e2"></div>
<div class="raised" style="left:480px;top:562px;width:16px;height:16px"></div>
<div class="raised" style="left:929px;top:562px;width:16px;height:16px"></div>
<div class="raised" style="left:496px;top:562px;width:419px;height:16px"></div>
<svg style="left:485px;top:566px" width="4" height="7" viewBox="0 0 4 7"><path d="M4 0v7L0 3.500z" fill="#000"/></svg>
<svg style="left:935px;top:566px" width="4" height="7" viewBox="0 0 4 7"><path d="M0 0v7L4 3.500z" fill="#000"/></svg>
<div style="left:9.3px;top:584.5px;font:11px 'DejaVu Sans Condensed','Liberation Sans',sans-serif;line-height:16px;height:16px;letter-spacing:-0.2px;white-space:pre;-webkit-text-stroke:0.25px;">35,433 B of 35,433 B in 1 of 3</div>
<div style="left:482.5px;top:584.5px;font:11px 'DejaVu Sans Condensed','Liberation Sans',sans-serif;line-height:16px;height:16px;letter-spacing:-0.2px;white-space:pre;-webkit-text-stroke:0.25px;">0 B of 47,548 B in 0 of 2</div>
<div style="left:2px;top:601px;width:946px;height:24px;background:#d9d6cf"></div>
<div style="left:5px;top:601px;width:638px;height:24px;background:#dcd9d2"></div>
<div class="gr" style="left:9px;top:607px;height:13px"></div>
<svg style="left:16px;top:605px" width="16" height="16" viewBox="0 0 16 16"><path d="M3 13l1.500-4 5-5 2.500 2.500-5 5z" fill="#b9b6ae" stroke="#8e8b84" stroke-width="0.800"/><path d="M1 15h1M3 15h1M5 15h1M1 13h1" stroke="#8e8b84"/></svg>
<div style="left:35.5px;top:606px;font:11px 'DejaVu Sans Condensed','Liberation Sans',sans-serif;line-height:16px;height:16px;letter-spacing:-0.17px;white-space:pre;-webkit-text-stroke:0.25px;color:#8a867e;">F2 Rename</div>
<svg style="left:97px;top:605px" width="16" height="16" viewBox="0 0 16 16"><path d="M1.500 1.500h9v13h-9z" fill="#e9e7e1" stroke="#8e8b84"/><path d="M3 4.500h5M3 6.500h4M3 8.500h3" stroke="#b5b2aa"/><path d="M7 12l1-3 5-6 2 1.500-5 6z" fill="#c9c6be" stroke="#8e8b84" stroke-width="0.800"/></svg>
<div style="left:115.9px;top:606px;font:11px 'DejaVu Sans Condensed','Liberation Sans',sans-serif;line-height:16px;height:16px;letter-spacing:-0.17px;white-space:pre;-webkit-text-stroke:0.25px;color:#8a867e;">F4 Edit</div>
<svg style="left:156px;top:605px" width="16" height="16" viewBox="0 0 16 16"><path d="M1.500 1.500h6v8h-6z" fill="#e9e7e1" stroke="#8e8b84"/><path d="M6.500 5.500h7v9h-7z" fill="#e9e7e1" stroke="#8e8b84"/><path d="M3 3.500h3M3 5.500h2M8 8h4M8 10h4M8 12h4" stroke="#a5a29a"/><path d="M9 3h4l-1.500-1.500M13 3l-1.500 1.500" stroke="#8e8b84" fill="none"/></svg>
<div style="left:175.9px;top:606px;font:11px 'DejaVu Sans Condensed','Liberation Sans',sans-serif;line-height:16px;height:16px;letter-spacing:0.01px;white-space:pre;-webkit-text-stroke:0.25px;color:#8a867e;">F5 Copy</div>
<svg style="left:224px;top:605px" width="16" height="16" viewBox="0 0 16 16"><path d="M1.500 1.500h6v8h-6z" fill="none" stroke="#a5a29a" stroke-dasharray="1 1"/><path d="M6.500 5.500h7v9h-7z" fill="#e9e7e1" stroke="#8e8b84"/><path d="M8 8h4M8 10h4M8 12h4" stroke="#a5a29a"/><path d="M9 3h4l-1.500-1.500M13 3l-1.500 1.500" stroke="#8e8b84" fill="none"/></svg>
<div style="left:242.5px;top:606px;font:11px 'DejaVu Sans Condensed','Liberation Sans',sans-serif;line-height:16px;height:16px;letter-spacing:0.05px;white-space:pre;-webkit-text-stroke:0.25px;color:#8a867e;">F6 Move</div>
<svg style="left:292px;top:605px" width="16" height="16" viewBox="0 0 16 16"><path d="M0.500 6.500l1-1.500h4l1 1.500h6v8h-12z" fill="#f4dd62" stroke="#8a7320"/><path d="M1.500 8h10" stroke="#fbf0b0"/><path d="M12.500 0.500v7M9 4h7M10 1.500l5 5M15 1.500l-5 5" stroke="#e03a2a" stroke-width="0.900"/></svg>
<div style="left:310.5px;top:606px;font:11px 'DejaVu Sans Condensed','Liberation Sans',sans-serif;line-height:16px;height:16px;letter-spacing:-0.04px;white-space:pre;-webkit-text-stroke:0.25px;">F7 Create Directory</div>
<svg style="left:414px;top:605px" width="16" height="16" viewBox="0 0 16 16"><path d="M2 2.500l11 11M13 2.500l-11 11" stroke="#9a978f" stroke-width="2"/></svg>
<div style="left:433.5px;top:606px;font:11px 'DejaVu Sans Condensed','Liberation Sans',sans-serif;line-height:16px;height:16px;letter-spacing:-0.21px;white-space:pre;-webkit-text-stroke:0.25px;color:#8a867e;">F8 Delete</div>
<svg style="left:487px;top:605px" width="16" height="16" viewBox="0 0 16 16"><path d="M1.500 5.500h12v9h-12z" fill="#dedbd4" stroke="#8e8b84"/><path d="M3.500 5.500v-2h6v2" fill="#e9e7e1" stroke="#8e8b84"/><path d="M3 8h6M3 10h6M3 12h6" stroke="#a5a29a"/><path d="M9 6l5-4.500 1.500 1.500-4.500 5z" fill="#c9c6be" stroke="#8e8b84" stroke-width="0.800"/></svg>
<div style="left:506.5px;top:606px;font:11px 'DejaVu Sans Condensed','Liberation Sans',sans-serif;line-height:16px;height:16px;letter-spacing:-0.09px;white-space:pre;-webkit-text-stroke:0.25px;color:#8a867e;">F9 Properties</div>
<svg style="left:578px;top:605px" width="16" height="16" viewBox="0 0 16 16"><rect x="5" y="1" width="6" height="2.500" fill="#222"/><path d="M4.500 3.500h7v10h-7z" fill="#3d62c8" stroke="#1d2b70"/><path d="M6.500 5.500h3.500v8h-3.500z" fill="#dfe6f7"/><path d="M0.500 14.500h15" stroke="#1d2b70" stroke-width="1.500"/><path d="M2 9.500v4M13.500 9.500v4" stroke="#b33" stroke-width="1.200"/></svg>
<div style="left:596.5px;top:606px;font:11px 'DejaVu Sans Condensed','Liberation Sans',sans-serif;line-height:16px;height:16px;letter-spacing:-0.02px;white-space:pre;-webkit-text-stroke:0.25px;">F10 Quit</div>
<div style="left:2px;top:626px;width:946px;height:1px;background:#e6e4de"></div>
<div style="left:5px;top:628px;width:719px;height:20px;border:1px solid;border-color:#c4c1b9 #f0eeea #f0eeea #c4c1b9"></div>
<div style="left:726px;top:628px;width:34px;height:20px;border:1px solid;border-color:#c4c1b9 #f0eeea #f0eeea #c4c1b9"></div>
<div style="left:762px;top:628px;width:68px;height:20px;border:1px solid;border-color:#c4c1b9 #f0eeea #f0eeea #c4c1b9"></div>
<div style="left:832px;top:628px;width:33px;height:20px;border:1px solid;border-color:#c4c1b9 #f0eeea #f0eeea #c4c1b9"></div>
<div style="left:867px;top:628px;width:79px;height:20px;border:1px solid;border-color:#c4c1b9 #f0eeea #f0eeea #c4c1b9"></div>
<svg style="left:735px;top:629px" width="14" height="16" viewBox="0 0 14 16"><path d="M3.500 8v-3.500a3.500 3.500 0 0 1 7 0v3.500" fill="none" stroke="#3a3a2a" stroke-width="1.600"/><rect x="0.800" y="7.500" width="12.400" height="8" fill="#e8e22a" stroke="#4a4a1a"/><path d="M2 10.500h10M2 12.500h10" stroke="#8f8a12"/></svg>
<div style="left:777.5px;top:630px;font:12px 'Liberation Sans',sans-serif;line-height:16px;height:16px;letter-spacing:-0.67px;white-space:pre;-webkit-text-stroke:0.25px;">SFTP-3</div>
<svg style="left:839px;top:629px" width="17" height="17" viewBox="0 0 17 17"><rect x="4.500" y="0.500" width="10" height="9" fill="#cfccc4" stroke="#8e8b84"/><rect x="1.500" y="3.500" width="10" height="9" fill="#dedbd4" stroke="#8e8b84"/><rect x="3" y="5" width="7" height="6" fill="#c4c1b9"/><path d="M4 14.500h9M6 16h6" stroke="#8e8b84"/></svg>
<div style="left:887.5px;top:630px;font:12px 'Liberation Sans',sans-serif;line-height:16px;height:16px;letter-spacing:-0.51px;white-space:pre;-webkit-text-stroke:0.25px;">0:38:06</div>
<svg style="left:934px;top:636px" width="13" height="13" viewBox="0 0 13 13"><path d="M12 1L1 12M12 5L5 12M12 9L9 12" stroke="#808080" stroke-width="1.200"/><path d="M13 1L1 13M13 5L5 13M13 9L9 13" stroke="#fff" stroke-width="0.800" transform="translate(-1.200,-1.200)"/></svg>
<div style="left:948px;top:2px;width:2px;height:649px;background:#505050;border-left:1px solid #a09d96"></div>
<div style="left:0;top:649px;width:950px;height:2px;background:#404040;border-top:1px solid #8a8880"></div>
<div style="left:271px;top:217px;width:410px;height:220px;background:#d4d0c8;border:1px solid;border-color:#d4d0c8 #404040 #404040 #d4d0c8;box-shadow:inset 1px 1px 0 #fff,inset -1px -1px 0 #808080"></div>
<div style="left:274px;top:220px;width:404px;height:18px;background:linear-gradient(to right,#808080,#c0c0c0)"></div>
<div style="left:274.5px;top:220px;font:bold 11px 'DejaVu Sans Condensed','Liberation Sans',sans-serif;line-height:16px;height:16px;letter-spacing:0.35px;white-space:pre;-webkit-text-stroke:0.25px;color:#d4d0c8;">0% Copying</div>
<div class="btn" style="left:642px;top:222px;width:16px;height:14px"></div>
<div style="left:642px;top:222px;width:16px;height:14px;text-align:center;line-height:13px;font:bold 11px/13px 'Liberation Sans',sans-serif">?</div>
<div class="btn" style="left:660px;top:222px;width:16px;height:14px"></div>
<svg style="left:664px;top:225px" width="8" height="7" viewBox="0 0 8 7"><path d="M0 0h2l2 2 2-2h2L5 3.5 8 7H6L4 5 2 7H0l3-3.5z" fill="#000"/></svg>
<div style="left:283px;top:408px;width:302px;height:15px;border:1px solid;border-color:#808080 #fff #fff #808080"></div>
<div class="sunken" style="left:593px;top:405px;width:80px;height:21px;background:#fff"></div>
<div style="left:596px;top:407px;font:11.5px 'Liberation Sans',sans-serif;line-height:16px;height:16px;letter-spacing:-0.55px;white-space:pre;-webkit-text-stroke:0.25px;">Unlimited</div>
<div class="btn" style="left:654px;top:407px;width:17px;height:17px"></div>
<svg style="left:659px;top:414px" width="7" height="4" viewBox="0 0 7 4"><path d="M0 0h7L3.500 4z" fill="#000"/></svg>
<div style="left:99px;top:245px;width:753px;height:162px;background:#d4d0c8;border:1px solid;border-color:#d4d0c8 #404040 #404040 #d4d0c8;box-shadow:inset 1px 1px 0 #fff,inset -1px -1px 0 #808080"></div>
<div style="left:102px;top:248px;width:747px;height:18px;background:linear-gradient(to right,#0a246a,#a6caf0)"></div>
<div style="left:103.5px;top:249px;font:bold 11px 'DejaVu Sans Condensed','Liberation Sans',sans-serif;line-height:16px;height:16px;letter-spacing:0.11px;white-space:pre;-webkit-text-stroke:0.25px;color:#fff;">Confirm</div>
<div class="btn" style="left:831px;top:250px;width:16px;height:14px"></div>
<svg style="left:835px;top:253px" width="8" height="7" viewBox="0 0 8 7"><path d="M0 0h2l2 2 2-2h2L5 3.5 8 7H6L4 5 2 7H0l3-3.5z" fill="#000"/></svg>
<svg style="left:113px;top:279px" width="34" height="35" viewBox="0 0 34 35"><defs><radialGradient id="qg" cx="38%" cy="30%" r="75%"><stop offset="0" stop-color="#ffffff"/><stop offset="0.450" stop-color="#eaf0fa"/><stop offset="0.800" stop-color="#bccde8"/><stop offset="1" stop-color="#869fc6"/></radialGradient></defs><path d="M16.500 25.500l4 7.500 0.800-1.500 2-7.500z" fill="#b4c5e0" stroke="#8499bc" stroke-width="0.800"/><ellipse cx="16.800" cy="14.200" rx="15.300" ry="12.600" fill="url(#qg)" stroke="#a9b8d2" stroke-width="0.800"/><path d="M17 25.500l3.300 5.500 2-7z" fill="#c6d4ea"/><text x="17" y="23" font-family="Liberation Serif,serif" font-weight="bold" font-size="25" fill="#1c3796" text-anchor="middle">?</text></svg>
<div style="left:161.5px;top:279px;font:11.5px 'Liberation Sans',sans-serif;line-height:16px;height:16px;letter-spacing:-0.41px;white-space:pre;-webkit-text-stroke:0.25px;">Remote file 'httpd.conf' already exists. Overwrite?</div>
<div style="left:161.5px;top:305px;font:11.5px 'Liberation Sans',sans-serif;line-height:16px;height:16px;letter-spacing:-0.67px;white-space:pre;-webkit-text-stroke:0.25px;">New:</div>
<div style="left:241.5px;top:305px;font:11.5px 'Liberation Sans',sans-serif;line-height:16px;height:16px;letter-spacing:-0.22px;white-space:pre;-webkit-text-stroke:0.25px;">35433 bytes, 09/11/2012 01:00:47</div>
<div style="left:161.5px;top:318px;font:11.5px 'Liberation Sans',sans-serif;line-height:16px;height:16px;letter-spacing:-0.68px;white-space:pre;-webkit-text-stroke:0.25px;">Existing:</div>
<div style="left:241.5px;top:318px;font:11.5px 'Liberation Sans',sans-serif;line-height:16px;height:16px;letter-spacing:-0.24px;white-space:pre;-webkit-text-stroke:0.25px;">34409 bytes, 05/10/2012 00:47:42</div>
<div style="left:114px;top:347px;width:75px;height:23px;background:#000"></div>
<div class="btn" style="left:115px;top:348px;width:73px;height:21px"></div>
<div style="left:141.7px;top:351px;font:11.5px 'Liberation Sans',sans-serif;line-height:16px;height:16px;letter-spacing:0.12px;white-space:pre;-webkit-text-stroke:0.25px;">Yes</div>
<div class="btn" style="left:195px;top:347px;width:75px;height:23px"></div>
<div style="left:225.1px;top:351px;font:11.5px 'Liberation Sans',sans-serif;line-height:16px;height:16px;letter-spacing:0.2px;white-space:pre;-webkit-text-stroke:0.25px;">No</div>
<div class="btn" style="left:276px;top:347px;width:75px;height:23px"></div>
<div style="left:296px;top:351px;font:11.5px 'Liberation Sans',sans-serif;line-height:16px;height:16px;letter-spacing:-0.16px;white-space:pre;-webkit-text-stroke:0.25px;">Cancel</div>
<div class="btn" style="left:357px;top:347px;width:75px;height:23px"></div>
<div style="left:375.1px;top:351px;font:11.5px 'Liberation Sans',sans-serif;line-height:16px;height:16px;letter-spacing:-0.21px;white-space:pre;-webkit-text-stroke:0.25px;">Append</div>
<div class="btn" style="left:438px;top:347px;width:75px;height:23px"></div>
<div style="left:449.5px;top:351px;font:11.5px 'Liberation Sans',sans-serif;line-height:16px;height:16px;letter-spacing:-0.38px;white-space:pre;-webkit-text-stroke:0.25px;">New name</div>
<div class="btn" style="left:519px;top:347px;width:75px;height:23px"></div>
<div style="left:529.8px;top:351px;font:11.5px 'Liberation Sans',sans-serif;line-height:16px;height:16px;letter-spacing:-0.43px;white-space:pre;-webkit-text-stroke:0.25px;">Newer only</div>
<div class="btn" style="left:600px;top:347px;width:75px;height:23px"></div>
<div style="left:617.1px;top:351px;font:11.5px 'Liberation Sans',sans-serif;line-height:16px;height:16px;letter-spacing:-0.23px;white-space:pre;-webkit-text-stroke:0.25px;">No to All</div>
<div class="btn" style="left:681px;top:347px;width:75px;height:23px"></div>
<div style="left:695.2px;top:351px;font:11.5px 'Liberation Sans',sans-serif;line-height:16px;height:16px;letter-spacing:-0.18px;white-space:pre;-webkit-text-stroke:0.25px;">Yes to All</div>
<div class="btn" style="left:762px;top:347px;width:75px;height:23px"></div>
<div style="left:787.9px;top:351px;font:11.5px 'Liberation Sans',sans-serif;line-height:16px;height:16px;letter-spacing:-0.25px;white-space:pre;-webkit-text-stroke:0.25px;">Help</div>
<div class="sunken" style="left:162px;top:381px;width:13px;height:13px;background:#fff"></div>
<div style="left:180.5px;top:380px;font:11.5px 'Liberation Sans',sans-serif;line-height:16px;height:16px;letter-spacing:-0.43px;white-space:pre;-webkit-text-stroke:0.25px;">Never ask me again</div>
<svg style="left:100px;top:380px" width="120" height="150" viewBox="100 380 120 150"><g stroke="#e6141c" fill="none" stroke-linecap="round"><path d="M128.300 472.700L197 396.500" stroke-width="2.300"/><path d="M177.500 404.800L199 394.400L192.300 414.300" stroke-width="2.200"/><path d="M184 404L197.500 396.500L192.500 409" stroke-width="1.600"/></g><text x="111.500" y="511.500" font-family="Liberation Sans,sans-serif" font-size="31" fill="#e6141c">:</text><text x="125.500" y="509" font-family="Liberation Sans,sans-serif" font-size="26" fill="#e6141c">)</text></svg>
</div></body></html>
